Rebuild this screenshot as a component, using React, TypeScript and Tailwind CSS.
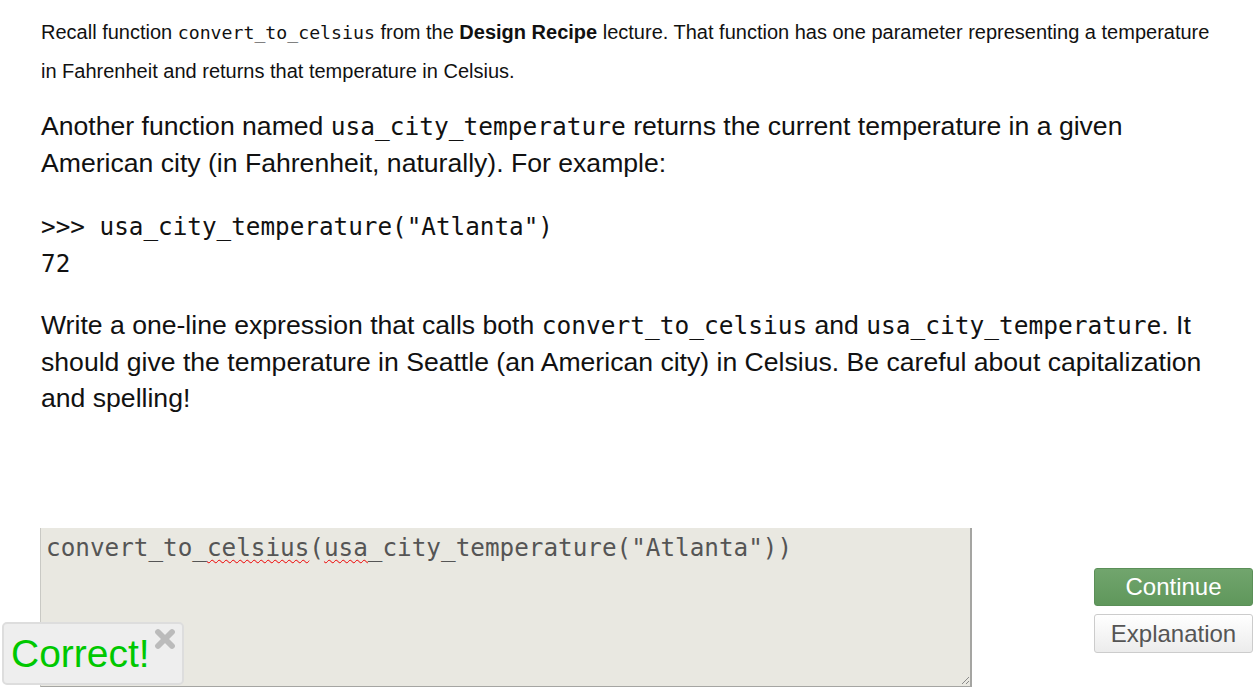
import { X } from 'lucide-react';

const sans = 'font-["Liberation_Sans",Arial,sans-serif]';
const mono = 'font-["DejaVu_Sans_Mono",monospace]';

function Code({ children, size }: { children: React.ReactNode; size: string }) {
  return <code className={`${mono} ${size}`}>{children}</code>;
}

export default function App() {
  return (
    <div className={`${sans} bg-white text-black w-[1260px] h-[695px] overflow-hidden pl-[41px] pr-[40px] pt-[13px]`}>
      {/* Intro */}
      <p className="text-[20px] leading-[38px] text-[#111]">
        Recall function <Code size="text-[18.2px]">convert_to_celsius</Code> from the <b>Design Recipe</b> lecture.
        That function has one parameter representing a temperature in Fahrenheit and returns that temperature in
        Celsius.
      </p>

      <p className="mt-[18px] text-[26.6px] leading-[36px] text-[#111]">
        Another function named <Code size="text-[24.5px]">usa_city_temperature</Code> returns the current temperature
        in a given American city (in Fahrenheit, naturally). For example:
      </p>

      <pre className={`${mono} mt-[27px] text-[24.3px] leading-[37px] text-[#111]`}>
        {'>>> usa_city_temperature("Atlanta")\n72'}
      </pre>

      <p className="mt-[25px] text-[26.6px] leading-[36px] text-[#111]">
        Write a one-line expression that calls both <Code size="text-[24.5px]">convert_to_celsius</Code> and{' '}
        <Code size="text-[24.5px]">usa_city_temperature</Code>. It should give the temperature in Seattle (an
        American city) in Celsius. Be careful about capitalization and spelling!
      </p>

      {/* Answer area */}
      <div className="mt-[112px] -ml-px -mr-[40px] flex items-start">
        <div className="relative w-[932px] h-[159px] shrink-0">
          <div
            className={`${mono} h-full w-full bg-[#e9e8e1] border-l border-l-[#c9c9c4] border-r-2 border-r-[#a5a5a2] border-b border-b-[#a5a5a2] pl-[5px] pt-[6px] text-[24.3px] leading-[28px] text-[#555]`}
          >
            convert_to_
            <span className="underline decoration-wavy decoration-[#e00] decoration-1 underline-offset-[3px]">celsius</span>(
            <span className="underline decoration-wavy decoration-[#e00] decoration-1 underline-offset-[3px]">usa</span>
            _city_temperature("Atlanta"))
          </div>
          {/* resize grip */}
          <svg className="absolute right-[2px] bottom-[2px]" width="10" height="10" viewBox="0 0 10 10">
            <path d="M9 2 L2 9 M9 6 L6 9" stroke="#8a8a8a" strokeWidth="1" />
          </svg>

          {/* Correct badge */}
          <div className="absolute left-[-38px] top-[94px] w-[182px] h-[63px] bg-[#eeeeee] border-2 border-[#dddddd] rounded-[5px] pl-[7px] flex items-center">
            <span className="text-[39px] leading-none text-[#00c800]">Correct!</span>
            <X className="absolute right-[3px] top-[1px] w-[28px] h-[28px] text-[#bbbbbb]" strokeWidth={5} />
          </div>
        </div>

        <div className="ml-[122px] mt-[40px] w-[159px] shrink-0 flex flex-col gap-[8px]">
          <button className="h-[38px] rounded-[3px] border border-[#5b8f58] bg-gradient-to-b from-[#71a56d] to-[#5f975b] text-white text-[24px] leading-none">
            Continue
          </button>
          <button className="h-[39px] rounded-[3px] border border-[#cccccc] bg-gradient-to-b from-white to-[#ececec] text-[#555] text-[24px] leading-none">
            Explanation
          </button>
        </div>
      </div>
    </div>
  );
}
